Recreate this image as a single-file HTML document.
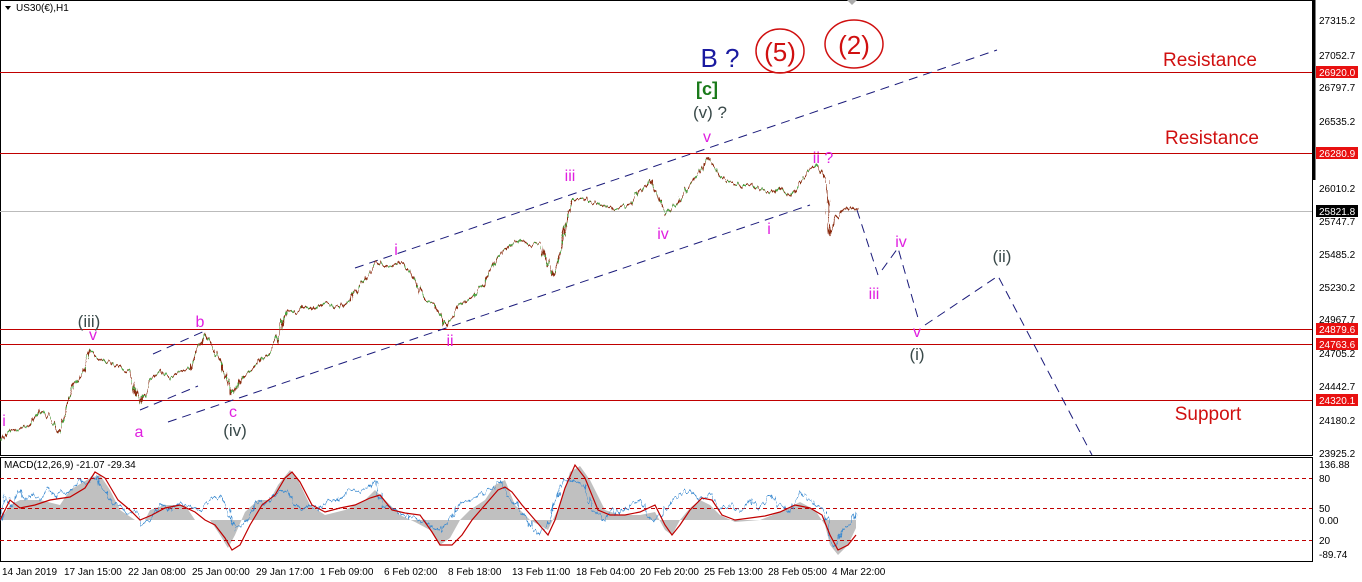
<!DOCTYPE html>
<html><head><meta charset="utf-8"><style>
html,body{margin:0;padding:0;background:#fff;width:1362px;height:582px;overflow:hidden}
svg{display:block}
text{font-family:"Liberation Sans","DejaVu Sans",sans-serif}
</style></head><body>
<svg width="1362" height="582" viewBox="0 0 1362 582" xmlns="http://www.w3.org/2000/svg">
<defs>
<filter id="jag" x="-5%" y="-20%" width="110%" height="140%">
<feTurbulence type="fractalNoise" baseFrequency="0.35 0.05" numOctaves="2" seed="3" result="n"/>
<feDisplacementMap in="SourceGraphic" in2="n" scale="9" xChannelSelector="R" yChannelSelector="G"/>
</filter>
<filter id="jag2" x="-5%" y="-30%" width="110%" height="160%">
<feTurbulence type="fractalNoise" baseFrequency="0.3 0.08" numOctaves="2" seed="7" result="n"/>
<feDisplacementMap in="SourceGraphic" in2="n" scale="10" xChannelSelector="R" yChannelSelector="G"/>
</filter>
</defs>
<rect width="1362" height="582" fill="#fff"/>
<rect x="0.5" y="0.5" width="1312" height="455" fill="none" stroke="#000"/>
<rect x="0.5" y="457.5" width="1312" height="104" fill="none" stroke="#000"/>
<line x1="1314" y1="0" x2="1314" y2="180" stroke="#000" stroke-width="3"/>
<g stroke="#c00000" stroke-width="1">
<line x1="0" y1="72.5" x2="1312" y2="72.5"/>
<line x1="0" y1="153.5" x2="1312" y2="153.5"/>
<line x1="0" y1="329.5" x2="1312" y2="329.5"/>
<line x1="0" y1="344.5" x2="1312" y2="344.5"/>
<line x1="0" y1="400.5" x2="1312" y2="400.5"/>
</g>
<line x1="0" y1="211.5" x2="1312" y2="211.5" stroke="#bbb"/>
<g stroke="#1a1a7a" stroke-width="1" stroke-dasharray="9,6" fill="none">
<line x1="355" y1="268" x2="997" y2="50"/>
<line x1="168" y1="422" x2="810" y2="205"/>
<line x1="153" y1="354" x2="207" y2="330"/>
<line x1="140" y1="410" x2="198" y2="386"/>
<polyline points="857,210 878,275"/>
<polyline points="882,270 898,248 918,318"/>
<polyline points="925,325 998,276 1092,455"/>
</g>
<g filter="url(#jag)">
<polyline fill="none" stroke="#8a2a10" stroke-width="1.4" points="0,440 10,432 20,430 30,425 40,410 50,418 60,432 66,410 72,385 80,378 90,350 100,360 110,362 120,367 130,372 140,405 150,380 160,370 170,378 180,372 190,368 198,350 205,335 212,345 220,360 232,395 240,380 250,372 260,360 270,352 280,330 286,310 295,312 305,305 315,310 325,303 340,308 350,300 360,285 368,275 378,262 390,268 400,262 410,272 418,285 425,300 435,305 445,325 452,318 460,305 468,300 475,295 483,285 490,270 497,258 505,250 512,245 520,240 530,245 540,243 548,265 553,275 560,255 566,225 572,200 582,198 592,203 602,204 612,208 622,206 630,205 640,190 650,180 658,195 665,215 672,208 680,200 690,185 700,170 708,158 715,168 722,178 732,183 742,186 752,184 762,190 770,193 780,188 790,196 800,182 808,172 815,165 822,170 826,178 828,210 830,235 835,218 842,212 850,207 857,210"/>
<polyline fill="none" stroke="#3cb043" stroke-width="1.2" stroke-dasharray="3,6" points="0,440 10,432 20,430 30,425 40,410 50,418 60,432 66,410 72,385 80,378 90,350 100,360 110,362 120,367 130,372 140,405 150,380 160,370 170,378 180,372 190,368 198,350 205,335 212,345 220,360 232,395 240,380 250,372 260,360 270,352 280,330 286,310 295,312 305,305 315,310 325,303 340,308 350,300 360,285 368,275 378,262 390,268 400,262 410,272 418,285 425,300 435,305 445,325 452,318 460,305 468,300 475,295 483,285 490,270 497,258 505,250 512,245 520,240 530,245 540,243 548,265 553,275 560,255 566,225 572,200 582,198 592,203 602,204 612,208 622,206 630,205 640,190 650,180 658,195 665,215 672,208 680,200 690,185 700,170 708,158 715,168 722,178 732,183 742,186 752,184 762,190 770,193 780,188 790,196 800,182 808,172 815,165 822,170"/>
</g>
<path d="M5 6 L11 6 L8 10 Z" fill="#000"/>
<text x="16" y="11" font-size="10" fill="#000">US30(€),H1</text>
<path d="M847 0 L857 0 L852 5 Z" fill="#aaa"/>
<g fill="#e020e0" font-size="16" text-anchor="middle">
<text x="4" y="426">i</text>
<text x="93" y="340">v</text>
<text x="200" y="327">b</text>
<text x="139" y="437">a</text>
<text x="233" y="417">c</text>
<text x="396" y="255">i</text>
<text x="450" y="346">ii</text>
<text x="570" y="181">iii</text>
<text x="663" y="239">iv</text>
<text x="707" y="142">v</text>
<text x="823" y="163">ii ?</text>
<text x="769" y="234">i</text>
<text x="901" y="247">iv</text>
<text x="874" y="299">iii</text>
<text x="917" y="337">v</text>
</g>
<g fill="#3a4a4a" font-size="17" text-anchor="middle">
<text x="89" y="327">(iii)</text>
<text x="235" y="436">(iv)</text>
<text x="710" y="118">(v) ?</text>
<text x="917" y="360">(i)</text>
<text x="1002" y="262">(ii)</text>
</g>
<text x="707" y="95" font-size="18" fill="#1a7a1a" text-anchor="middle" font-weight="bold">[c]</text>
<text x="720" y="67" font-size="26" fill="#1a1aa0" text-anchor="middle">B ?</text>
<g fill="none" stroke="#d01010" stroke-width="1.5">
<ellipse cx="780" cy="51" rx="24" ry="22"/>
<ellipse cx="854" cy="44" rx="29" ry="24"/>
</g>
<text x="780" y="61" font-size="26" fill="#d01010" text-anchor="middle">(5)</text>
<text x="854" y="54" font-size="26" fill="#d01010" text-anchor="middle">(2)</text>
<g fill="#d01010" font-size="19" text-anchor="middle">
<text x="1210" y="66">Resistance</text>
<text x="1212" y="144">Resistance</text>
<text x="1208" y="420">Support</text>
</g>
<g font-size="10" fill="#000">
<text x="1319" y="24">27315.2</text>
<text x="1319" y="59">27052.7</text>
<text x="1319" y="91">26797.7</text>
<text x="1319" y="125">26535.2</text>
<text x="1319" y="192">26010.2</text>
<text x="1319" y="225">25747.7</text>
<text x="1319" y="258">25485.2</text>
<text x="1319" y="291">25230.2</text>
<text x="1319" y="323">24967.7</text>
<text x="1319" y="357">24705.2</text>
<text x="1319" y="390">24442.7</text>
<text x="1319" y="424">24180.2</text>
<text x="1319" y="457">23925.2</text>
<text x="1319" y="468">136.88</text>
<text x="1319" y="482">80</text>
<text x="1319" y="512">50</text>
<text x="1319" y="524">0.00</text>
<text x="1319" y="544">20</text>
<text x="1319" y="558">-89.74</text>
</g>
<g fill="#e81010">
<rect x="1316" y="66" width="42" height="12"/>
<rect x="1316" y="147" width="42" height="12"/>
<rect x="1316" y="323" width="42" height="12"/>
<rect x="1316" y="338" width="42" height="12"/>
<rect x="1316" y="394" width="42" height="12"/>
</g>
<rect x="1316" y="205" width="42" height="12" fill="#000"/>
<g font-size="10" fill="#fff">
<text x="1319" y="76">26920.0</text>
<text x="1319" y="157">26280.9</text>
<text x="1319" y="215">25821.8</text>
<text x="1319" y="333">24879.6</text>
<text x="1319" y="348">24763.6</text>
<text x="1319" y="404">24320.1</text>
</g>
<text x="4" y="468" font-size="10" fill="#000">MACD(12,26,9) -21.07 -29.34</text>
<polygon fill="#c0c0c0" points="0,520 10,505 20,500 40,500 60,505 70,490 90,478 100,475 110,490 120,510 135,520 145,520 150,510 165,505 185,505 195,520 210,520 220,535 228,548 235,535 245,512 258,500 270,500 278,485 290,470 298,480 310,505 325,515 345,510 365,500 375,490 385,500 400,515 415,522 430,530 440,545 450,538 460,520 470,510 485,500 495,485 505,480 515,505 530,520 548,530 560,505 570,472 580,466 590,480 605,510 620,515 640,515 655,512 665,530 672,535 680,520 690,508 700,500 710,505 720,515 735,522 760,520 780,512 800,502 815,510 825,525 830,545 838,555 848,545 856,528 856,520 0,520"/>
<g stroke="#c00000" stroke-width="1" stroke-dasharray="4,3">
<line x1="0" y1="478.5" x2="1312" y2="478.5"/>
<line x1="0" y1="508.5" x2="1312" y2="508.5"/>
<line x1="0" y1="540.5" x2="1312" y2="540.5"/>
</g>
<polyline filter="url(#jag2)" fill="none" stroke="#3a8ad0" stroke-width="1" points="0,520 5,495 12,505 18,490 25,500 32,492 40,500 48,488 55,498 62,490 70,495 78,480 88,483 95,475 102,490 110,500 118,505 128,515 135,510 142,525 150,520 160,505 170,510 180,502 190,505 200,510 210,500 220,495 228,510 235,530 242,525 250,515 258,500 265,505 275,495 285,490 292,500 300,510 310,505 320,508 330,500 340,500 350,490 360,492 368,488 375,480 382,505 395,510 405,515 420,520 430,525 440,530 450,520 460,505 470,500 480,495 490,490 500,482 510,498 520,510 530,525 540,535 548,525 558,490 565,478 575,482 585,485 592,510 605,520 612,510 620,513 630,505 640,500 648,515 656,520 664,512 672,500 680,495 690,490 700,500 710,495 720,510 730,505 740,512 750,500 760,508 770,495 780,505 790,512 800,492 810,500 820,508 826,512 830,540 836,548 842,530 850,525 856,510"/>
<polyline fill="none" stroke="#c00000" stroke-width="1.2" points="0,520 10,500 20,508 35,505 50,500 70,497 85,488 95,472 105,478 118,500 130,510 140,520 152,515 165,508 180,505 195,512 205,520 215,525 225,538 232,550 240,545 250,525 262,505 275,495 285,478 292,472 300,482 312,505 325,512 340,508 355,505 370,498 380,495 392,510 405,513 420,515 432,532 440,545 452,545 462,535 472,520 485,505 498,490 505,487 512,492 522,505 535,520 548,535 555,520 565,488 575,465 585,478 598,510 610,515 625,515 640,512 655,505 665,525 672,535 680,525 690,510 702,498 712,500 722,515 735,520 750,518 765,516 780,512 795,505 810,508 822,515 830,535 838,550 848,545 856,535"/>
<g font-size="10" fill="#000">
<text x="2" y="575">14 Jan 2019</text>
<text x="64" y="575">17 Jan 15:00</text>
<text x="128" y="575">22 Jan 08:00</text>
<text x="192" y="575">25 Jan 00:00</text>
<text x="256" y="575">29 Jan 17:00</text>
<text x="320" y="575">1 Feb 09:00</text>
<text x="384" y="575">6 Feb 02:00</text>
<text x="448" y="575">8 Feb 18:00</text>
<text x="512" y="575">13 Feb 11:00</text>
<text x="576" y="575">18 Feb 04:00</text>
<text x="640" y="575">20 Feb 20:00</text>
<text x="704" y="575">25 Feb 13:00</text>
<text x="768" y="575">28 Feb 05:00</text>
<text x="832" y="575">4 Mar 22:00</text>
</g>
</svg>
</body></html>
